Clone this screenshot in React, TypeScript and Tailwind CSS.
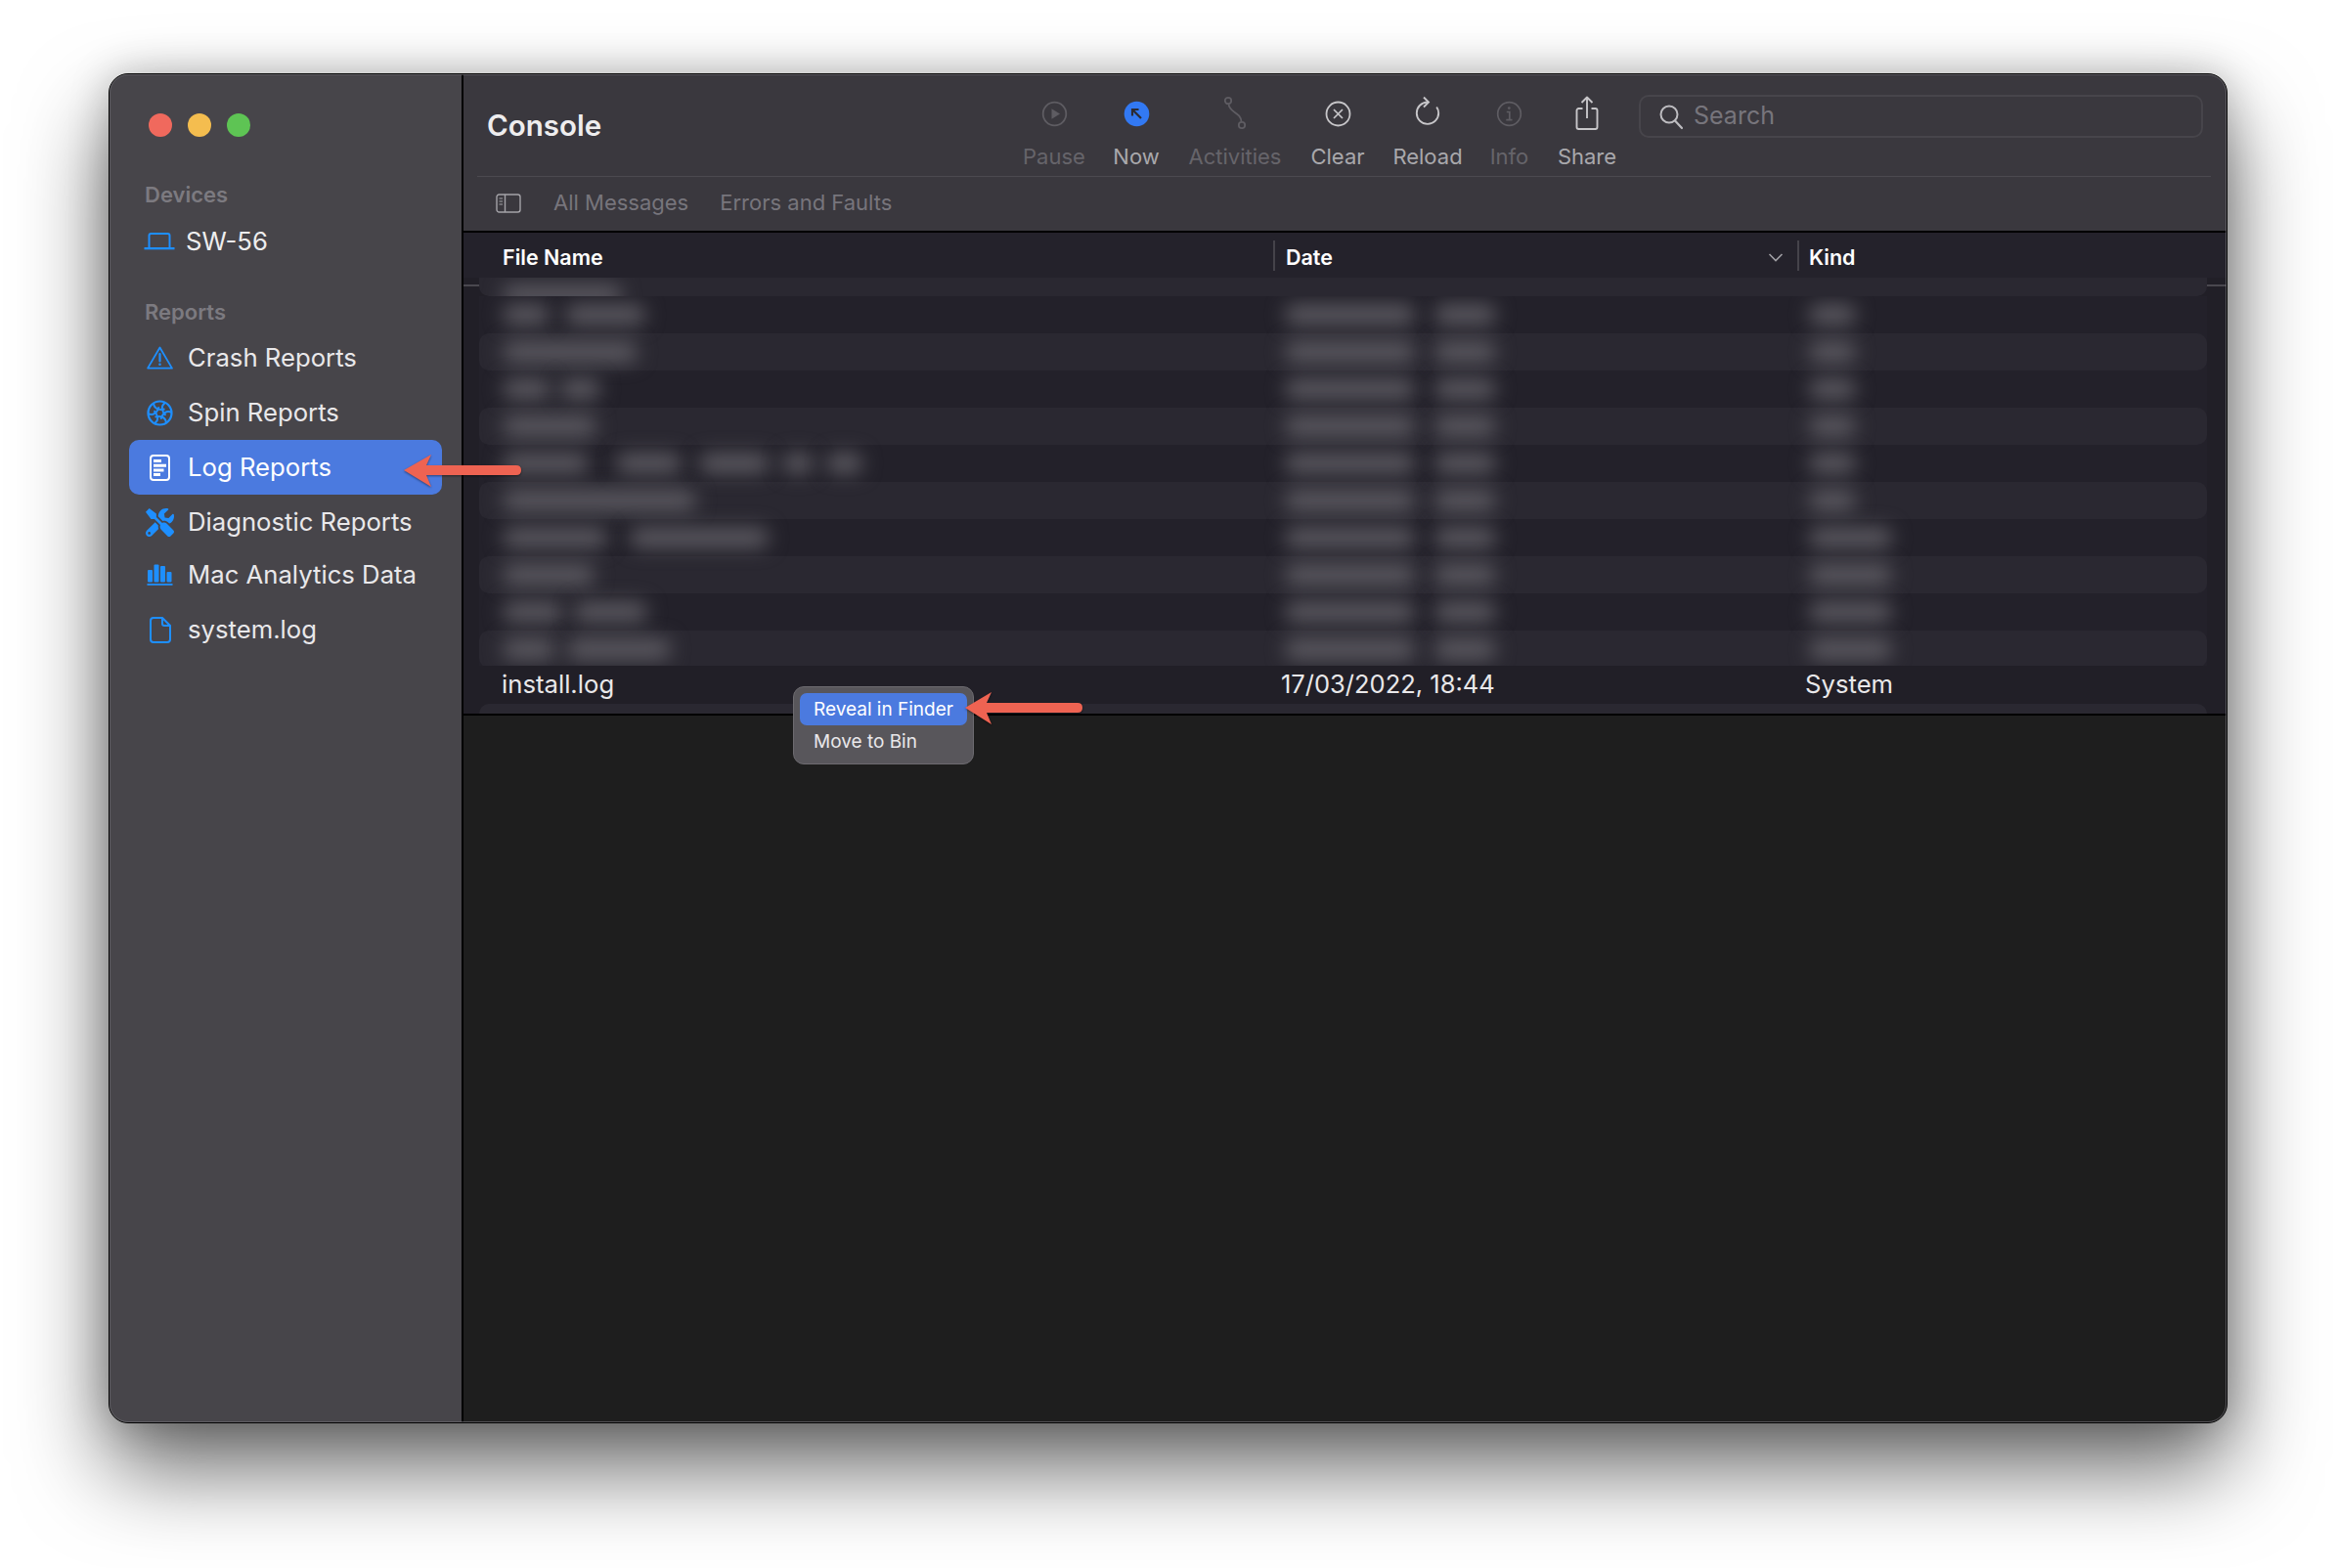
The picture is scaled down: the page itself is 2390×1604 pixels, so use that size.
import React from "react";
import { FaTools } from "react-icons/fa";

const blue = "#1e8fff";

function Laptop() {
  return (
    <svg width="32" height="18" viewBox="0 0 32 18" fill="none" stroke={blue} strokeWidth="2">
      <path d="M5.500 15V3a2 2 0 0 1 2-2h17a2 2 0 0 1 2 2v12" />
      <path d="M0.500 16.200h31" strokeWidth="2.200" />
    </svg>
  );
}
function Warning() {
  return (
    <svg width="27" height="24" viewBox="0 0 27 24" fill="none" stroke={blue} strokeWidth="1.800" strokeLinejoin="round">
      <path d="M13.500 1.500 25.900 22.600H1.100Z" />
      <path d="M13.500 8v7.400" strokeWidth="2.200" strokeLinecap="round" />
      <circle cx="13.500" cy="18.800" r="1.300" fill={blue} stroke="none" />
    </svg>
  );
}
function Spin() {
  return (
    <svg width="27" height="27" viewBox="0 0 27 27" fill="none" stroke={blue} strokeWidth="2.200">
      <circle cx="13.500" cy="13.500" r="12" />
      {[0, 60, 120, 180, 240, 300].map((r) => (
        <path key={r} d="M7 3.500C7.500 9 12 11 18.500 9.500" transform={`rotate(${r} 13.500 13.500)`} strokeWidth="1.900" />
      ))}
    </svg>
  );
}
function LogDoc() {
  return (
    <svg width="21" height="27" viewBox="0 0 21 27" fill="none">
      <rect x="1" y="1" width="19" height="25" rx="3" stroke="#fff" strokeWidth="2" />
      <path d="M4 5h8v3H4zM4 9.700h13v3H4zM4 14.400h10.500v3H4zM4 19.100h7v3H4z" fill="#fff" />
    </svg>
  );
}
function Bars() {
  return (
    <svg width="27" height="22" viewBox="0 0 27 22" fill={blue}>
      <rect x="1" y="6" width="5" height="12.500" rx="1" />
      <rect x="7.500" y="0.500" width="5" height="18" rx="1" />
      <rect x="14" y="2" width="5" height="16.500" rx="1" />
      <rect x="20.500" y="8" width="5" height="10.500" rx="1" />
      <rect x="0.500" y="20" width="26" height="1.800" />
    </svg>
  );
}
function FileIcon() {
  return (
    <svg width="22" height="27" viewBox="0 0 22 27" fill="none" stroke={blue} strokeWidth="2" strokeLinejoin="round">
      <path d="M4 1h9l8 8v14a3 3 0 0 1-3 3H4a3 3 0 0 1-3-3V4a3 3 0 0 1 3-3Z" />
      <path d="M13 1v6a2 2 0 0 0 2 2h6" />
    </svg>
  );
}

function PauseIcon() {
  return (
    <svg width="27" height="27" viewBox="0 0 27 27" fill="none" stroke="#5e5c62" strokeWidth="1.800">
      <circle cx="13.500" cy="13.500" r="11.800" />
      <path d="M10.500 8.300v10.400l8.500-5.200Z" fill="#5e5c62" stroke="none" />
    </svg>
  );
}
function NowIcon() {
  return (
    <svg width="27" height="27" viewBox="0 0 27 27" fill="none">
      <circle cx="13.500" cy="13.500" r="12.800" fill="#3279f3" />
      <path d="M9.500 9.500 18 18" stroke="#2b2b33" strokeWidth="2.200" />
      <path d="M9 15.500V9h6.500" stroke="#2b2b33" strokeWidth="2.200" />
    </svg>
  );
}
function ActivitiesIcon() {
  return (
    <svg width="27" height="36" viewBox="0 0 27 36" fill="none" stroke="#5e5c62" strokeWidth="1.800">
      <circle cx="6" cy="5" r="3.200" />
      <circle cx="20" cy="30" r="3.200" />
      <path d="M6.500 8.300C7 18 19 16 19.600 26.800" />
    </svg>
  );
}
function ClearIcon() {
  return (
    <svg width="27" height="27" viewBox="0 0 27 27" fill="none" stroke="#c7c6c9" strokeWidth="1.800">
      <circle cx="13.500" cy="13.500" r="12" />
      <path d="M9 9l9 9M18 9l-9 9" strokeWidth="1.700" />
    </svg>
  );
}
function ReloadIcon() {
  return (
    <svg width="26" height="36" viewBox="0 0 26 36" fill="none" stroke="#c7c6c9" strokeWidth="1.900">
      <path d="M9 1.500 14 6.500 9 11.500" />
      <path d="M13 6.500a11.200 11.200 0 1 0 11.200 11.300c0-2.400-.7-4.500-2-6.300" />
    </svg>
  );
}
function InfoIcon() {
  return (
    <svg width="27" height="27" viewBox="0 0 27 27" fill="none" stroke="#5e5c62" strokeWidth="1.700">
      <circle cx="13.500" cy="13.500" r="11.800" />
      <circle cx="13.300" cy="7.600" r="1.400" fill="#5e5c62" stroke="none" />
      <path d="M10.800 11.500h3v8M10.300 19.600h6.200" />
    </svg>
  );
}
function ShareIcon() {
  return (
    <svg width="24" height="36" viewBox="0 0 24 36" fill="none" stroke="#c7c6c9" strokeWidth="1.900" strokeLinejoin="round">
      <path d="M7.500 13H3.500a2 2 0 0 0-2 2v17a2 2 0 0 0 2 2h17a2 2 0 0 0 2-2V15a2 2 0 0 0-2-2h-4" />
      <path d="M12 23V2M6.500 7 12 1.500 17.500 7" />
    </svg>
  );
}
function SidebarToggle() {
  return (
    <svg width="26" height="20" viewBox="0 0 26 20" fill="none" stroke="#a4a3a8" strokeWidth="1.400">
      <rect x="1" y="1" width="24" height="18" rx="2.500" />
      <path d="M9.500 1v18" />
      <path d="M3.500 5h3.500M3.500 8h3.500M3.500 11h3.500" strokeWidth="1.200" />
    </svg>
  );
}
function SearchIcon() {
  return (
    <svg width="26" height="27" viewBox="0 0 26 27" fill="none" stroke="#bdbcc0" strokeWidth="2">
      <circle cx="11" cy="11" r="8.500" />
      <path d="M17 17.500 24 25" strokeLinecap="round" strokeWidth="2.200" />
    </svg>
  );
}

const sideItems = [
  { label: "Crash Reports", icon: <Warning />, cls: "" },
  { label: "Spin Reports", icon: <Spin />, cls: "" },
  { label: "Log Reports", icon: <LogDoc />, cls: "bg-[#4b7adf] rounded-[10px] text-white" },
  { label: "Diagnostic Reports", icon: <FaTools size={29} color={blue} />, cls: "" },
  { label: "Mac Analytics Data", icon: <Bars />, cls: "-mt-[2px]" },
  { label: "system.log", icon: <FileIcon />, cls: "" },
];

const toolbar = [
  { label: "Pause", icon: <PauseIcon />, w: "w-[84px]", text: "text-[#66646a]" },
  { label: "Now", icon: <NowIcon />, w: "w-[84px]", text: "text-[#a9a8ac]" },
  { label: "Activities", icon: <ActivitiesIcon />, w: "w-[118px]", text: "text-[#66646a]" },
  { label: "Clear", icon: <ClearIcon />, w: "w-[92px]", text: "text-[#a9a8ac]" },
  { label: "Reload", icon: <ReloadIcon />, w: "w-[92px]", text: "text-[#a9a8ac]" },
  { label: "Info", icon: <InfoIcon />, w: "w-[75px]", text: "text-[#66646a]" },
  { label: "Share", icon: <ShareIcon />, w: "w-[84px]", text: "text-[#a9a8ac]" },
];

const D: [number, number] = [131, 61];
const rows: { name: [number, number][]; kind: number }[] = [
  { name: [[0, 46], [18, 80]], kind: 46 },
  { name: [[0, 136]], kind: 46 },
  { name: [[0, 48], [10, 40]], kind: 46 },
  { name: [[0, 94]], kind: 46 },
  { name: [[0, 86], [30, 65], [20, 70], [15, 30], [15, 35]], kind: 46 },
  { name: [[0, 196]], kind: 46 },
  { name: [[0, 105], [25, 140]], kind: 83 },
  { name: [[0, 92]], kind: 83 },
  { name: [[0, 60], [12, 74]], kind: 83 },
  { name: [[0, 52], [14, 104]], kind: 83 },
];

function Smear({ width, gap = 0 }: { width: number; gap?: number }) {
  return <div className="h-[20px] rounded-[6px] bg-[#5e5c63] blur-[10px]" style={{ width, marginLeft: gap }} />;
}

function BlurRow({ i, r }: { i: number; r: (typeof rows)[number] }) {
  const band = i % 2 === 1;
  return (
    <div className={`flex h-[38px] shrink-0 items-center rounded-[10px] ${band ? "bg-[#2a2831]" : ""}`}>
      <div className="flex w-[825px] pl-[25px]">
        {r.name.map(([g, w], k) => (
          <Smear key={k} gap={g} width={w} />
        ))}
      </div>
      <div className="flex w-[536px]">
        <Smear width={D[0]} />
        <Smear gap={22} width={D[1]} />
      </div>
      <Smear width={r.kind} />
    </div>
  );
}

function Arrow({ className, w, h, d }: { className: string; w: number; h: number; d: string }) {
  return (
    <svg className={`absolute drop-shadow-[0_1px_1px_rgba(0,0,0,0.45)] ${className}`} width={w} height={h} viewBox={`0 0 ${w} ${h}`}>
      <path d={d} fill="#ee6352" />
    </svg>
  );
}

export default function App() {
  return (
    <div className="relative h-[1604px] w-[2390px] overflow-hidden bg-white pl-[111px] pt-[75px] antialiased [font-family:Inter,'Noto_Sans',sans-serif]">
      <div className="relative flex h-[1381px] w-[2167px] rounded-[20px] border border-black bg-[#1e1e1e] shadow-[0_46px_90px_rgba(0,0,0,0.6),0_0_40px_rgba(0,0,0,0.22)]">
        <div className="flex w-full overflow-hidden rounded-[19px]">
          <aside className="flex w-[360px] shrink-0 flex-col bg-[#47454a] pl-[20px] pr-[20px] pt-[40px]">
            <div className="ml-[20px] flex gap-[16px]">
              <span className="h-[24px] w-[24px] rounded-full bg-[#f0695d]" />
              <span className="h-[24px] w-[24px] rounded-full bg-[#f4bd4f]" />
              <span className="h-[24px] w-[24px] rounded-full bg-[#5ec454]" />
            </div>
            <div className="ml-[16px] mt-[45px] h-[28px] text-[22px] font-semibold leading-[28px] text-[#7c7a80]">Devices</div>
            <div className="mt-[16px] flex h-[36px] items-center">
              <span className="ml-[15px] flex w-[43px]"><Laptop /></span>
              <span className="text-[25.7px] text-[#eeedee]">SW-56</span>
            </div>
            <div className="ml-[16px] mt-[40px] h-[28px] text-[22px] font-semibold leading-[28px] text-[#7c7a80]">Reports</div>
            <div className="mt-[5px] flex flex-col">
              {sideItems.map((it) => (
                <div key={it.label} className={`flex h-[56px] items-center text-[25.7px] text-[#e9e8ea] ${it.cls}`}>
                  <span className="flex w-[60px] justify-end pr-[14px]"><span className="flex w-[29px] justify-center">{it.icon}</span></span>
                  {it.label}
                </div>
              ))}
            </div>
          </aside>
          <div className="w-[2px] shrink-0 bg-black" />
          <main className="flex min-w-0 flex-1 flex-col">
            <div className="flex h-[104px] shrink-0 items-start bg-[#3a383e] pl-[24px] pr-[24px]">
              <h1 className="mt-[33px] flex-1 text-[29.5px] font-semibold leading-[38px] text-[#eeedee]">Console</h1>
              {toolbar.map((t) => (
                <div key={t.label} className={`flex flex-col items-center ${t.w}`}>
                  <div className="mt-[20px] flex h-[40px] items-center justify-center">{t.icon}</div>
                  <div className={`mt-[10px] text-[22px] leading-[28px] ${t.text}`}>{t.label}</div>
                </div>
              ))}
              <div className="ml-[11px] mt-[21px] flex h-[44px] w-[577px] items-center rounded-[10px] border-2 border-[#47454b] pl-[18px]">
                <SearchIcon />
                <span className="ml-[10px] text-[25px] text-[#77757c]">Search</span>
              </div>
            </div>
            <div className="flex h-[56px] shrink-0 flex-col bg-[#3a383e]">
              <div className="ml-[14px] mr-[16px] h-[1px] shrink-0 bg-[#4c4a50]" />
              <div className="flex flex-1 items-center pb-[2px] pl-[33px] text-[22px] text-[#77757c]">
                <SidebarToggle />
                <span className="ml-[33px]">All Messages</span>
                <span className="ml-[32px]">Errors and Faults</span>
              </div>
            </div>
            <div className="h-[2px] shrink-0 bg-black" />
            <div className="flex h-[46px] shrink-0 items-center bg-[#24222b] pt-[4px] text-[21.5px] font-semibold text-white">
              <span className="ml-[40px] w-[788px]">File Name</span>
              <span className="-mt-[4px] h-[31px] w-[2px] bg-[#45434a]" />
              <span className="ml-[11px] w-[493px]">Date</span>
              <svg className="mr-[14px]" width="16" height="9" viewBox="0 0 16 9" fill="none" stroke="#a09fa4" strokeWidth="1.600"><path d="M1.500 1 8 7.500 14.500 1" /></svg>
              <span className="-mt-[4px] h-[31px] w-[2px] bg-[#45434a]" />
              <span className="ml-[10px]">Kind</span>
            </div>
            <div className="flex h-[446px] shrink-0 overflow-hidden bg-[#211f27]">
              <div className="w-[16px] shrink-0"><div className="mt-[7px] h-[2px] bg-[#4a484f]" /></div>
              <div className="flex min-w-0 flex-1 flex-col">
                <div className="h-[19px] shrink-0 overflow-hidden rounded-b-[10px] bg-[#2a2831] pl-[25px] pt-[8px]"><Smear width={120} /></div>
                <div className="flex h-[378px] shrink-0 flex-col overflow-hidden bg-[#23212a]">
                  {rows.map((r, i) => (
                    <BlurRow key={i} i={i} r={r} />
                  ))}
                </div>
                <div className="flex h-[39px] shrink-0 items-center text-[25.7px] text-[#e9e8ea]">
                  <span className="w-[820px] pl-[23px]">install.log</span>
                  <span className="w-[536px] text-[25.500px]">17/03/2022, 18:44</span>
                  <span>System</span>
                </div>
                <div className="h-[10px] shrink-0 rounded-t-[10px] bg-[#2a2831]" />
              </div>
              <div className="w-[20px] shrink-0"><div className="mt-[7px] h-[2px] bg-[#4a484f]" /></div>
            </div>
            <div className="h-[2px] shrink-0 bg-black" />
            <div className="flex-1 bg-[#1e1e1e]" />
          </main>
        </div>
        <div className="pointer-events-none absolute inset-0 rounded-[19px] border border-[#69686d]/70" />
      </div>

      <div className="absolute left-[811px] top-[702px] flex h-[80px] w-[185px] flex-col rounded-[11px] border border-[#6d6b70] bg-[#58565b] px-[6px] pt-[6px] text-[19px] text-[#e9e8ea]">
        <div className="flex h-[33px] items-center rounded-[7px] bg-[#4b7adf] pb-[0px] pl-[14px] pt-[1px] text-white">Reveal in Finder</div>
        <div className="flex h-[33px] items-center pl-[14px] pt-[2px]">Move to Bin</div>
      </div>

      <Arrow className="left-[405px] top-[460px]" w={135} h={45} d="M8 21 36 5 31 16H123Q128 16 128 21T123 26H31L36 38Z" />
      <Arrow className="left-[980px] top-[704px]" w={135} h={45} d="M7 20 34 4 29 15H122Q127 15 127 20T122 25H29L34 37Z" />
    </div>
  );
}
